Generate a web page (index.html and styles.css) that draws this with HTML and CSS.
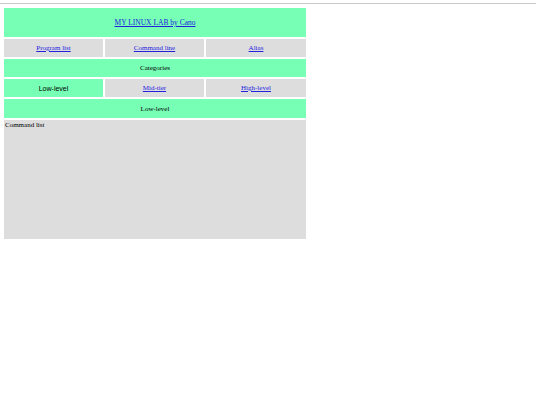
FILE: index.html
```html
<!DOCTYPE html>
<html>
<head>
<meta charset="utf-8">
<link rel="stylesheet" href="styles.css">
</head>
<body>
<div class="rule"></div>
<div class="page">
  <div class="cell green span3 title"><a href="#">MY LINUX LAB by Cano</a></div>
  <div class="cell gray nav"><a href="#">Program list</a></div>
  <div class="cell gray nav"><a href="#">Command line</a></div>
  <div class="cell gray nav"><a href="#">Alias</a></div>
  <div class="cell green span3 bar">Categories</div>
  <div class="cell green nav sans">Low-level</div>
  <div class="cell gray nav"><a href="#">Mid-tier</a></div>
  <div class="cell gray nav"><a href="#">High-level</a></div>
  <div class="cell green span3 bar tall">Low-level</div>
  <div class="cell gray span3 list">Command list</div>
</div>
</body>
</html>
```
FILE: styles.css
```css
html, body {
  margin: 0;
  padding: 0;
  background: #fff;
}
body {
  font-family: "Liberation Serif", "Times New Roman", serif;
  font-size: 7px;
  color: #000;
}
.rule {
  margin-top: 3px;
  width: 536px;
  height: 1px;
  background: #c8c8c8;
}
.page {
  margin: 4px 0 0 4px;
  width: 302px;
  display: grid;
  grid-template-columns: 99px 99px 100px;
  column-gap: 2px;
  row-gap: 2px;
}
.cell {
  display: flex;
  align-items: center;
  justify-content: center;
}
.span3 { grid-column: 1 / 4; }
.green { background: #77ffb6; }
.gray { background: #dddddd; }
.title { height: 29px; font-size: 7.5px; }
.nav { height: 18px; }
.bar { height: 18px; }
.bar.tall { height: 19px; }
.list {
  height: 119px;
  align-items: flex-start;
  justify-content: flex-start;
  padding: 1px 1px;
  box-sizing: border-box;
}
.sans {
  font-family: "Liberation Sans", Arial, sans-serif;
}
a { color: #2222dd; }
```
